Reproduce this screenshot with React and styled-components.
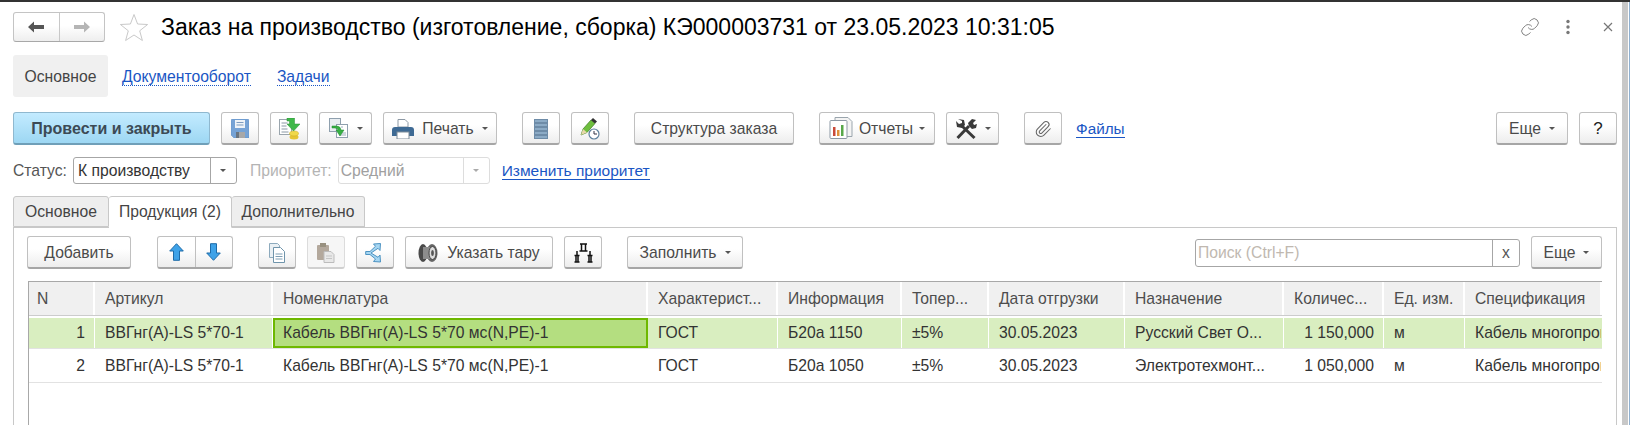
import React from 'react';
import styled, { createGlobalStyle } from 'styled-components';
import { Link as LinkIcon, Paperclip } from 'lucide-react';

const GlobalStyle = createGlobalStyle`
    html, body { margin: 0; padding: 0; background: #fff; }
    body { font-family: "Liberation Sans", Arial, sans-serif; font-size: 15.7px; color: #333; }
`;

const Page = styled.div`
    display: flex;
    width: 1630px;
    height: 425px;
    overflow: hidden;
    border-top: 2px solid #333;
    box-sizing: border-box;
`;
const Main = styled.div`
    flex: 1;
    min-width: 0;
    padding: 10px 0 0 13px;
`;
const SideStripe = styled.div`
    width: 8px;
    display: flex;
    border-left: 6px solid #c8c8c8;
    box-sizing: border-box;
    &::after { content: ''; margin-left: 1px; width: 1px; background: #8fb0d0; }
`;

const TitleRow = styled.div`
    display: flex;
    align-items: center;
    height: 30px;
    padding-right: 9px;
`;
const NavGroup = styled.div`
    display: flex;
    width: 92px;
    height: 30px;
    box-sizing: border-box;
    border: 1px solid #c4c4c4;
    border-bottom-color: #a8a8a8;
    border-radius: 3px;
    background: linear-gradient(#fff 45%, #eee);
`;
const NavCell = styled.div`
    flex: 1;
    display: flex;
    align-items: center;
    justify-content: center;
    & + & { border-left: 1px solid #c8c8c8; }
`;
const Title = styled.h1`
    margin: 0 0 0 12px;
    font-size: 23px;
    font-weight: 400;
    color: #000;
    white-space: nowrap;
`;
const WindowIcons = styled.div`
    margin-left: auto;
    display: flex;
    align-items: center;
    color: #777;
`;

const SectionNav = styled.nav`
    display: flex;
    align-items: center;
    margin-top: 13px;
    height: 42px;
`;
const SectionActive = styled.div`
    width: 95px;
    height: 42px;
    box-sizing: border-box;
    padding-top: 1px;
    display: flex;
    align-items: center;
    justify-content: center;
    background: #f0f0f0;
    border-radius: 3px;
    color: #444;
`;
const SectionLink = styled.a`
    margin-left: ${p => p.$gap}px;
    margin-top: 2px;
    color: #1a56c4;
    border-bottom: 1px dotted #1a56c4;
    line-height: 16px;
`;

const Toolbar = styled.div`
    display: flex;
    align-items: center;
    gap: 11px;
    margin-top: ${p => p.$top}px;
    padding-right: ${p => p.$right || 0}px;
`;
const Btn = styled.div`
    width: ${p => p.$w}px;
    height: 33px;
    flex: none;
    box-sizing: border-box;
    padding-top: 1px;
    display: flex;
    align-items: center;
    justify-content: center;
    gap: ${p => p.$iconGap ?? 8}px;
    margin-left: ${p => p.$ml || 0}px;
    border: 1px solid #c0c0c0;
    border-bottom: 2px solid #a6a6a6;
    border-radius: 3px;
    background: linear-gradient(#fff 40%, #ededed);
    color: #4a4a4a;
    white-space: nowrap;
`;
const PrimaryBtn = styled(Btn)`
    border-color: #8fb8cf;
    border-bottom-color: #6f9fb8;
    background: linear-gradient(#c3ebff, #9dd7f3);
    color: #3c4a55;
    font-size: 16px;
    font-weight: 700;
`;
const DisabledBtn = styled(Btn)`
    border-color: #dcdcdc;
    border-bottom-color: #d0d0d0;
    background: #f6f6f6;
`;
const HelpBtn = styled(Btn)`
    color: #222;
    font-size: 17px;
`;
const SplitBtn = styled(Btn)`
    gap: 0;
    padding-top: 0;
`;
const SplitCell = styled.div`
    flex: 1;
    height: 100%;
    display: flex;
    align-items: center;
    justify-content: center;
    & + & { border-left: 1px solid #c0c0c0; }
`;
const Caret = styled.span`
    width: 0;
    height: 0;
    border-left: 3px solid transparent;
    border-right: 3px solid transparent;
    border-top: 3px solid ${p => p.$light ? '#aaa' : '#555'};
`;
const PlainLink = styled.a`
    margin-left: ${p => p.$ml || 0}px;
    margin-top: 1px;
    color: #1a56c4;
    border-bottom: 1px solid #1a56c4;
    font-size: ${p => p.$size || 15.3}px;
    line-height: 16px;
`;
const PushRight = styled.div`
    margin-left: auto;
`;

const StatusRow = styled.div`
    display: flex;
    align-items: center;
    margin-top: 12px;
    height: 27px;
`;
const FieldLabel = styled.span`
    color: ${p => p.$off ? '#b4b4b4' : '#555'};
    margin-left: ${p => p.$ml || 0}px;
    margin-right: 6px;
    padding-top: 1px;
`;
const Select = styled.div`
    width: ${p => p.$w}px;
    height: 27px;
    box-sizing: border-box;
    display: flex;
    align-items: center;
    border: 1px solid ${p => p.$off ? '#ddd' : '#a6a6a6'};
    border-radius: 3px;
    color: ${p => p.$off ? '#a0a0a0' : '#333'};
    padding-left: ${p => p.$off ? 2 : 4}px;
`;
const SelectValue = styled.span`
    flex: 1;
    padding-top: 1px;
`;
const SelectBtn = styled.div`
    width: 25px;
    height: 100%;
    display: flex;
    align-items: center;
    justify-content: center;
    border-left: 1px solid ${p => p.$off ? '#ddd' : '#a6a6a6'};
`;

const TabBar = styled.div`
    display: flex;
    margin-top: 12px;
    height: 31px;
    position: relative;
    z-index: 1;
`;
const Tab = styled.div`
    width: ${p => p.$w}px;
    box-sizing: border-box;
    display: flex;
    align-items: center;
    justify-content: center;
    border: 1px solid #c8c8c8;
    border-radius: 3px 3px 0 0;
    background: ${p => p.$active ? '#fff' : '#eee'};
    border-bottom-color: ${p => p.$active ? '#fff' : '#c8c8c8'};
    height: ${p => p.$active ? 32 : 31}px;
    color: #444;
    & + & { border-left: none; }
`;
const Panel = styled.div`
    width: 1604px;
    box-sizing: border-box;
    border: 1px solid #c8c8c8;
    padding: 8px 14px 0 13px;
    height: 400px;
`;
const SearchBox = styled.div`
    width: 325px;
    height: 28px;
    box-sizing: border-box;
    display: flex;
    align-items: center;
    border: 1px solid #a6a6a6;
    border-radius: 3px;
    padding-left: 2px;
    color: #c0b8b0;
`;
const SearchClear = styled.div`
    width: 26px;
    height: 100%;
    margin-left: auto;
    display: flex;
    align-items: center;
    justify-content: center;
    border-left: 1px solid #a6a6a6;
    color: #555;
`;

const Table = styled.div`
    margin-top: 12px;
    margin-left: 1px;
    border: 1px solid #a8a8a8;
    border-right: none;
    height: 300px;
    overflow: hidden;
`;
const COLUMNS = '66px 178px 375px 130px 124px 87px 136px 159px 100px 81px 137px';
const HeadRow = styled.div`
    display: grid;
    grid-template-columns: ${COLUMNS};
    height: 33px;
    background: #f0f0f0;
    border-bottom: 1px solid #ccc;
`;
const HeadCell = styled.div`
    display: flex;
    align-items: center;
    padding-left: 10px;
    border-right: 2px solid #fff;
    color: #4d4d4d;
    white-space: nowrap;
    overflow: hidden;
    &:first-child { padding-left: 8px; }
`;
const Row = styled.div`
    display: grid;
    grid-template-columns: ${COLUMNS};
    height: ${p => p.$h}px;
    margin-top: ${p => p.$top || 0}px;
    background: ${p => p.$selected ? '#d9eec0' : '#fff'};
    border-bottom: 1px solid #e2e2e2;
    box-sizing: border-box;
`;
const Cell = styled.div`
    display: flex;
    align-items: center;
    justify-content: ${p => p.$right ? 'flex-end' : 'flex-start'};
    padding: ${p => p.$right ? '0 9px 0 0' : '0 0 0 10px'};
    border-right: 1px solid ${p => p.$selected ? '#fff' : 'transparent'};
    white-space: nowrap;
    overflow: hidden;
    color: #333;
`;
const CurrentCell = styled(Cell)`
    background: #b4de80;
    border: 2px solid #6eb800;
    padding-left: 8px;
`;

const ArrowLeft = ({ color }) => (
    <svg width="20" height="14" viewBox="0 0 20 14"><path d="M2 7 8 1.500V5h10v4H8v3.500z" fill={color} /></svg>
);
const ArrowRight = ({ color }) => (
    <svg width="20" height="14" viewBox="0 0 20 14"><path d="M18 7 12 1.500V5H2v4h10v3.500z" fill={color} /></svg>
);
const Star = () => (
    <svg width="30" height="29" viewBox="0 0 30 29" style={{ marginLeft: 14 }}>
        <path d="M15 1.500 18.600 11l10 .5-7.900 6.300 2.700 9.700L15 22l-8.400 5.500 2.700-9.700L1.400 11.500l10-.5z" fill="#fff" stroke="#c9c9c9" />
    </svg>
);
const Dots = () => (
    <svg width="6" height="16" viewBox="0 0 6 16" style={{ marginLeft: 25 }}>
        <circle cx="3" cy="2.500" r="1.700" fill="#777" /><circle cx="3" cy="8" r="1.700" fill="#777" /><circle cx="3" cy="13.500" r="1.700" fill="#777" />
    </svg>
);
const CloseIcon = () => (
    <svg width="10" height="10" viewBox="0 0 10 10" style={{ marginLeft: 32 }}>
        <path d="M1 1l8 8M9 1 1 9" stroke="#777" strokeWidth="1.200" />
    </svg>
);
const SaveIcon = () => (
    <svg width="18" height="19" viewBox="0 0 18 19">
        <path d="M0 1.500Q0 0 1.500 0h15Q18 0 18 1.500V19H3l-3-3z" fill="#76a3d6" stroke="#5f8dc0" strokeWidth="0.500" />
        <rect x="4" y="1" width="10" height="8" fill="#eef3f8" />
        <path d="M5.500 3.500h7M5.500 6h7" stroke="#7d9cc0" />
        <rect x="5" y="13" width="9" height="6" fill="#a8a8a8" />
        <rect x="5" y="13" width="3" height="6" fill="#6a7580" />
    </svg>
);
const PostIcon = () => (
    <svg width="21" height="22" viewBox="0 0 21 22">
        <rect x="0.500" y="1.500" width="12" height="15" fill="#fff" stroke="#9aa5ad" />
        <path d="M2.500 5h6M2.500 8h5M2.500 11h6M2.500 14h7" stroke="#8a98a5" />
        <ellipse cx="15" cy="19" rx="4.500" ry="2.500" fill="#e6c534" />
        <ellipse cx="15" cy="15.500" rx="4.500" ry="2.500" fill="#f0d84a" stroke="#c9a820" strokeWidth="0.500" />
        <path d="M8 0h7.500v6H21l-6.500 7L8 6h2.500V3H8z" fill="#3fb84a" stroke="#2a8f36" strokeWidth="0.500" />
    </svg>
);
const DocsLinkIcon = () => (
    <svg width="20" height="21" viewBox="0 0 20 21">
        <rect x="0.500" y="0.500" width="11" height="13" fill="#e9eef2" stroke="#8fa0ae" />
        <rect x="7.500" y="6.500" width="11" height="13" fill="#fff" stroke="#8fa0ae" />
        <path d="M13 8v2M9 15h8M10 17h7" stroke="#9fb0bd" />
        <path d="M3 8h4.500q4 0 4.500 4h3l-4 6-4-6h2q-.5-2-3-2H3z" fill="#38b043" stroke="#1f8a30" strokeWidth="0.500" />
    </svg>
);
const PrinterIcon = () => (
    <svg width="22" height="20" viewBox="0 0 22 20">
        <path d="M6 0.500h7l3 3V8H6z" fill="#fff" stroke="#8d99a5" />
        <path d="M3 8h16q3 0 3 3v6H0v-6q0-3 3-3z" fill="#3e6a94" />
        <rect x="5" y="13" width="12" height="7" fill="#fff" stroke="#7d8b98" />
    </svg>
);
const ListIcon = () => (
    <svg width="14" height="20" viewBox="0 0 14 20">
        {[0, 4, 8, 12, 16].map(y => <rect key={y} x="0.500" y={y + 0.500} width="13" height="3" fill="#8cabc6" stroke="#6e8ca8" />)}
    </svg>
);
const PencilClockIcon = () => (
    <svg width="20" height="22" viewBox="0 0 20 22">
        <path d="M1 17 3 11 11 2l4 3.500-8 9z" fill="#6fbf3e" stroke="#3d7d22" strokeWidth="0.700" />
        <path d="M11 2l2-2 4 3.500-2 2z" fill="#333" />
        <path d="M1 17l2-6 4 3.500z" fill="#e8d8a8" />
        <circle cx="14" cy="16" r="5" fill="#fff" stroke="#5c7f9c" strokeWidth="1.200" />
        <path d="M14 13v3h3" stroke="#334" fill="none" />
    </svg>
);
const ReportIcon = () => (
    <svg width="24" height="23" viewBox="0 0 24 23">
        <path d="M6 .5h13l4 4v15H6z" fill="#f4f4f4" stroke="#9aa5ad" />
        <rect x="1" y="3.500" width="17" height="18" rx="1" fill="#fff" stroke="#8d99a5" />
        <rect x="4" y="10" width="2.500" height="9" fill="#c94a3a" />
        <rect x="8" y="13" width="2.500" height="6" fill="#e0913a" />
        <rect x="12" y="8" width="2.500" height="11" fill="#58a84a" />
    </svg>
);
const ToolsIcon = () => (
    <svg width="22" height="22" viewBox="0 0 22 22">
        <path d="M2.500 20 14 8" stroke="#3a3a3a" strokeWidth="3" />
        <path d="M19.500 20 7 8" stroke="#3a3a3a" strokeWidth="3" />
        <path d="M3 1 9 2l1 5-3 3-5-1-1-6 3 3 3-1 0-2z" fill="#3a3a3a" />
        <path d="M13 5l4-4 4 1-3 3 1 2 3-1-1 4-4 1-3-3z" fill="#3a3a3a" />
    </svg>
);
const UpIcon = () => (
    <svg width="15" height="18" viewBox="0 0 15 18"><path d="M7.500.7 14.300 8H10.500v9.300h-6V8H.7z" fill="#3ea2e8" stroke="#1d6ba8" /></svg>
);
const DownIcon = () => (
    <svg width="15" height="18" viewBox="0 0 15 18"><path d="M7.500 17.300 14.300 10H10.500V.7h-6V10H.7z" fill="#3ea2e8" stroke="#1d6ba8" /></svg>
);
const CopyIcon = () => (
    <svg width="16" height="20" viewBox="0 0 16 20">
        <path d="M.5.500h8l2 2v12H.5z" fill="#eaf0f4" stroke="#8daabd" />
        <path d="M4.500 4.500h7l4 4v11h-11z" fill="#fff" stroke="#6f94ab" />
        <path d="M6.500 11h7M6.500 13.500h7M6.500 16h7" stroke="#7d9db2" />
    </svg>
);
const PasteIcon = () => (
    <svg width="18" height="20" viewBox="0 0 18 20">
        <rect x="0" y="2" width="12" height="15" rx="1" fill="#b3a89c" />
        <rect x="3" y="0" width="6" height="4" fill="#98907f" />
        <path d="M7 8.500h7l3 3v8H7z" fill="#e8e8e8" stroke="#bcbcbc" />
        <path d="M9 13h6M9 15.500h6" stroke="#c5c5c5" />
    </svg>
);
const ShareIcon = () => (
    <svg width="20" height="20" viewBox="0 0 20 20">
        <path d="M.7 8.500v3H5l5.500 4.500-2 2.500 7 .5-.5-7-2 2.300L6 10l7-4.700 2 2.200.5-7-7 .5 2 2.300L5 8.500z" fill="#a6d6f2" stroke="#4d93c2" strokeLinejoin="round" />
    </svg>
);
const SpoolIcon = () => (
    <svg width="20" height="20" viewBox="0 0 20 20">
        <ellipse cx="5" cy="10" rx="4.500" ry="9" fill="#4a4a4a" />
        <ellipse cx="14" cy="10" rx="5.500" ry="9" fill="#666" />
        <rect x="5" y="4" width="9" height="12" fill="#8c8c8c" />
        <ellipse cx="14.500" cy="10" rx="3.500" ry="6.500" fill="#ddd" stroke="#444" />
        <ellipse cx="14.500" cy="10" rx="1.400" ry="3" fill="#555" />
    </svg>
);
const TreeIcon = () => (
    <svg width="19" height="20" viewBox="0 0 19 20" fill="none" stroke="#111">
        <path d="M6 1h7M7.500 1v7M11.500 1v7M5.500 8h8M3 8v4M16 8v4" strokeWidth="1.500" />
        <path d="M.5 12.500h5M.5 19h5M13.500 12.500h5M13.500 19h5M2 12.500V19M4 12.500V19M15 12.500V19M17 12.500V19" strokeWidth="1.500" />
    </svg>
);

const HEADERS = ['N', 'Артикул', 'Номенклатура', 'Характерист...', 'Информация', 'Топер...', 'Дата отгрузки', 'Назначение', 'Количес...', 'Ед. изм.', 'Спецификация'];

const ROWS = [
    { n: 1, info: 'Б20а 1150', target: 'Русский Свет О...', qty: '1 150,000', selected: true, h: 31, top: 2 },
    { n: 2, info: 'Б20а 1050', target: 'Электротехмонт...', qty: '1 050,000', h: 34 },
];

const App = () => {
    return (
        <>
            <GlobalStyle />
            <Page>
                <Main>
                    <TitleRow>
                        <NavGroup>
                            <NavCell><ArrowLeft color="#555" /></NavCell>
                            <NavCell><ArrowRight color="#b5b5b5" /></NavCell>
                        </NavGroup>
                        <Star />
                        <Title>Заказ на производство (изготовление, сборка) КЭ000003731 от 23.05.2023 10:31:05</Title>
                        <WindowIcons>
                            <LinkIcon size={20} strokeWidth={1.1} />
                            <Dots />
                            <CloseIcon />
                        </WindowIcons>
                    </TitleRow>

                    <SectionNav>
                        <SectionActive>Основное</SectionActive>
                        <SectionLink $gap={14}>Документооборот</SectionLink>
                        <SectionLink $gap={26}>Задачи</SectionLink>
                    </SectionNav>

                    <Toolbar $top={15} $right={5}>
                        <PrimaryBtn $w={197}>Провести и закрыть</PrimaryBtn>
                        <Btn $w={38}><SaveIcon /></Btn>
                        <Btn $w={38}><PostIcon /></Btn>
                        <Btn $w={53}><DocsLinkIcon /><Caret /></Btn>
                        <Btn $w={114}><PrinterIcon /><span>Печать</span><Caret /></Btn>
                        <Btn $w={38} $ml={14}><ListIcon /></Btn>
                        <Btn $w={38}><PencilClockIcon /></Btn>
                        <Btn $w={160} $ml={14}>Структура заказа</Btn>
                        <Btn $w={116} $ml={14} $iconGap={6}><ReportIcon /><span>Отчеты</span><Caret /></Btn>
                        <Btn $w={53}><ToolsIcon /><Caret /></Btn>
                        <Btn $w={38} $ml={14}><Paperclip size={18} strokeWidth={1.4} color="#666" /></Btn>
                        <PlainLink $ml={3}>Файлы</PlainLink>
                        <PushRight />
                        <Btn $w={72}>Еще<Caret /></Btn>
                        <HelpBtn $w={38}>?</HelpBtn>
                    </Toolbar>

                    <StatusRow>
                        <FieldLabel>Статус:</FieldLabel>
                        <Select $w={164}>
                            <SelectValue>К производству</SelectValue>
                            <SelectBtn><Caret /></SelectBtn>
                        </Select>
                        <FieldLabel $off $ml={13}>Приоритет:</FieldLabel>
                        <Select $off $w={152}>
                            <SelectValue>Средний</SelectValue>
                            <SelectBtn $off><Caret $light /></SelectBtn>
                        </Select>
                        <PlainLink $ml={12} $size={15.5}>Изменить приоритет</PlainLink>
                    </StatusRow>

                    <TabBar>
                        <Tab $w={96}>Основное</Tab>
                        <Tab $w={123} $active>Продукция (2)</Tab>
                        <Tab $w={133}>Дополнительно</Tab>
                    </TabBar>
                    <Panel>
                        <Toolbar $top={0}>
                            <Btn $w={104}>Добавить</Btn>
                            <SplitBtn $w={76} $ml={15}>
                                <SplitCell><UpIcon /></SplitCell>
                                <SplitCell><DownIcon /></SplitCell>
                            </SplitBtn>
                            <Btn $w={38} $ml={14}><CopyIcon /></Btn>
                            <DisabledBtn $w={38}><PasteIcon /></DisabledBtn>
                            <Btn $w={38}><ShareIcon /></Btn>
                            <Btn $w={148} $iconGap={9}><SpoolIcon /><span>Указать тару</span></Btn>
                            <Btn $w={38}><TreeIcon /></Btn>
                            <Btn $w={116} $ml={14}>Заполнить<Caret /></Btn>
                            <PushRight />
                            <SearchBox>
                                Поиск (Ctrl+F)
                                <SearchClear>x</SearchClear>
                            </SearchBox>
                            <Btn $w={71}>Еще<Caret /></Btn>
                        </Toolbar>
                        <Table>
                            <HeadRow>
                                {HEADERS.map(h => <HeadCell key={h}>{h}</HeadCell>)}
                            </HeadRow>
                            {ROWS.map(r => (
                                <Row key={r.n} $selected={r.selected} $h={r.h} $top={r.top}>
                                    <Cell $right $selected={r.selected}>{r.n}</Cell>
                                    <Cell $selected={r.selected}>ВВГнг(А)-LS 5*70-1</Cell>
                                    {r.selected
                                        ? <CurrentCell>Кабель ВВГнг(А)-LS 5*70 мс(N,PE)-1</CurrentCell>
                                        : <Cell>Кабель ВВГнг(А)-LS 5*70 мс(N,PE)-1</Cell>}
                                    <Cell $selected={r.selected}>ГОСТ</Cell>
                                    <Cell $selected={r.selected}>{r.info}</Cell>
                                    <Cell $selected={r.selected}>±5%</Cell>
                                    <Cell $selected={r.selected}>30.05.2023</Cell>
                                    <Cell $selected={r.selected}>{r.target}</Cell>
                                    <Cell $right $selected={r.selected}>{r.qty}</Cell>
                                    <Cell $selected={r.selected}>м</Cell>
                                    <Cell>Кабель многопровод</Cell>
                                </Row>
                            ))}
                        </Table>
                    </Panel>
                </Main>
                <SideStripe />
            </Page>
        </>
    );
};

export default App;
